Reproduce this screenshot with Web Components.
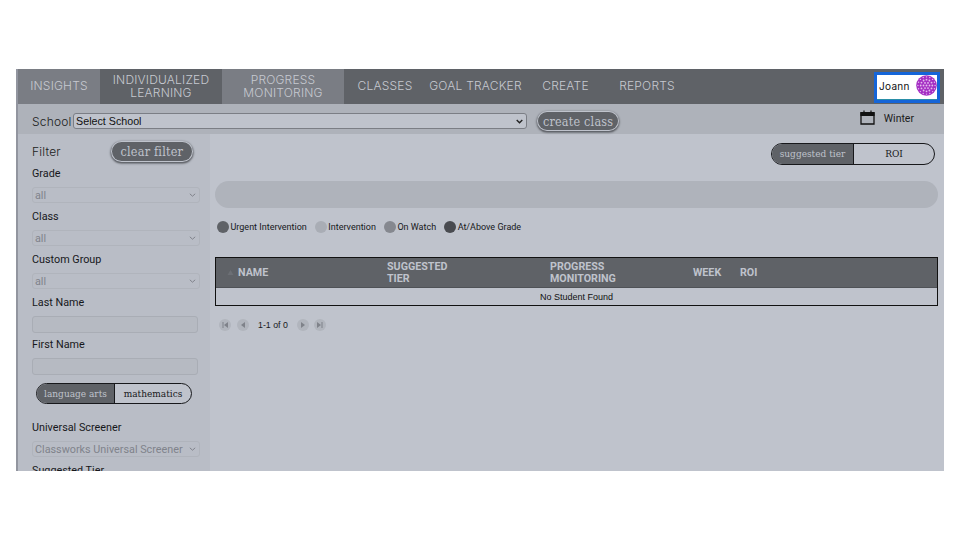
<!DOCTYPE html>
<html><head><meta charset="utf-8">
<style>
html,body{margin:0;padding:0;background:#fff}
body{width:960px;height:540px;overflow:hidden;font-family:Roboto,sans-serif}
app-frame{margin:69px 16px 0}
</style></head><body>
<app-frame>
  <top-nav></top-nav>
  <school-bar></school-bar>
  <div style="display:flex;flex:1;min-height:0">
    <filter-panel></filter-panel>
    <main-panel></main-panel>
  </div>
</app-frame>
<script>
function def(name, css, html){
  customElements.define(name, class extends HTMLElement{
    constructor(){super();const r=this.attachShadow({mode:'open'});r.innerHTML='<style>'+css+'</style>'+(typeof html==='function'?html(this):html);}
  });
}
const NAVFONT='Inter,"Open Sans",sans-serif';
const dots=(()=>{let s='';for(let r of [3,5.8,8.6]){const n=r<4?6:r<7?12:16;for(let i=0;i<n;i++){const a=i*2*Math.PI/n;s+=`<circle cx="${(10.5+r*Math.cos(a)).toFixed(2)}" cy="${(10.5+r*Math.sin(a)).toFixed(2)}" r="${r<7?.9:.7}"/>`}}return s+'<circle cx="10.5" cy="10.5" r="1"/>'})();
def('app-frame',`:host{display:flex;flex-direction:column;width:928px;height:402px;box-sizing:border-box;overflow:hidden;background:#bfc3cc;border-left:2px solid #92959f}`,`<slot></slot>`);
def('nav-item',`:host{display:flex;align-items:center;justify-content:center;text-align:center;box-sizing:border-box;height:35px;padding-bottom:2px;font:300 12px/13px ${NAVFONT};letter-spacing:.2px;color:#c6c9d0;white-space:pre;background:var(--bg,#5f6267);width:var(--w,auto);flex:none}`,`<slot></slot>`);
def('user-chip',`:host{display:flex;align-items:center;justify-content:space-between;box-sizing:border-box;width:66px;height:31px;margin:3px 4px 1px auto;background:#fff;border:3px solid #1565d8;box-shadow:inset 0 -1px 0 #2a8fa8;padding:0 0 4px 2px;font:400 10px Inter,sans-serif;letter-spacing:.3px;color:#111}
svg{display:block}`,`<span>Joann</span><svg width="21" height="21" viewBox="0 0 21 21"><circle cx="10.5" cy="10.5" r="10.3" fill="#a52fc4"/><g fill="#e5bdee">${dots}</g></svg>`);
def('top-nav',`:host{display:flex;height:35px;background:#5f6267;flex:none}`,`
<nav-item style="--w:82px;--bg:#7a7d84">INSIGHTS</nav-item>
<nav-item style="--w:122px;--bg:#5f6267">INDIVIDUALIZED
LEARNING</nav-item>
<nav-item style="--w:122px;--bg:#7a7d84">PROGRESS
MONITORING</nav-item>
<nav-item style="--w:82px">CLASSES</nav-item>
<nav-item style="--w:99px">GOAL TRACKER</nav-item>
<nav-item style="--w:81px">CREATE</nav-item>
<nav-item style="--w:82px">REPORTS</nav-item>
<user-chip></user-chip>`);
def('slab-btn',`:host{display:inline-flex;align-items:center;justify-content:center;box-sizing:border-box;border-radius:12px;background:#5f6267;color:#bfc3cc;font:400 12.5px "DejaVu Serif","Liberation Serif",serif;font-stretch:condensed;box-shadow:0 0 0 1px #bfc3cc,0 1px 2px 1.5px #55585e;height:var(--h,20px);width:var(--w,auto);flex:none}`,`<slot></slot>`);
def('school-bar',`:host{display:flex;align-items:center;box-sizing:border-box;height:30px;background:#aeb2ba;padding:4px 0 0 14px;font:300 12px Inter,sans-serif;letter-spacing:.2px;color:#1b1c20;flex:none}
.sel{box-sizing:border-box;width:454px;height:16px;margin-left:1.5px;border:1px solid #7b7e85;border-bottom-width:1.5px;border-radius:3px;background:#bfc3cc;display:flex;align-items:center;justify-content:space-between;padding:0 3px 0 2px;font:400 10.7px "Liberation Sans",sans-serif;letter-spacing:0;color:#111}
slab-btn{margin-left:11px;--w:80px;--h:18px}
.cal{margin-left:auto;display:flex;align-items:center;gap:9px;font:400 10.5px Roboto,sans-serif;letter-spacing:0;margin-right:30px;position:relative;top:-4px}
.cal span{padding-top:2px}
svg{display:block}`,`<span>School</span><div class="sel"><span>Select School</span><svg width="7" height="5" viewBox="0 0 7 5"><path d="M.7 1 3.5 3.8 6.3 1" fill="none" stroke="#222" stroke-width="1.4"/></svg></div><slab-btn>create class</slab-btn><div class="cal"><svg width="15" height="15" viewBox="0 0 15 15"><path d="M1 3h13v11H1z" fill="none" stroke="#111" stroke-width="1.3"/><path d="M1 2.5h13V5.5H1zM4 0.5v3M11 0.5v3" stroke="#111" stroke-width="1.2" fill="#111"/></svg><span>Winter</span></div>`);
def('field-label',`:host{display:block;font:400 10.8px/13px Roboto,sans-serif;color:#17181b;flex:none}`,`<slot></slot>`);
def('dim-select',`:host{display:flex;align-items:center;justify-content:space-between;box-sizing:border-box;width:168px;height:16px;border:1px solid #b0b4bc;border-radius:3px;padding:0 3px 0 2px;font:400 10.8px Roboto,sans-serif;color:#80838b;flex:none;white-space:nowrap}`,`<slot></slot><svg width="7" height="4" viewBox="0 0 7 4"><path d="M.8.8 3.5 3.2 6.2.8" fill="none" stroke="#80838b" stroke-width="1"/></svg>`);
def('dim-input',`:host{display:block;box-sizing:border-box;width:166px;height:17px;border:1px solid #a9adb5;border-radius:3px;background:#b6bac2;flex:none}`,``);
def('seg-toggle',`:host{display:inline-flex;box-sizing:border-box;height:var(--h,22px);width:var(--w);border:1px solid #17181b;border-radius:12px;overflow:hidden;font:400 9px "DejaVu Serif","Liberation Serif",serif;background:#bfc3cc;flex:none}
div{display:flex;align-items:center;justify-content:center;white-space:nowrap}
.a{background:#5f6267;color:#bfc3cc;border-right:1px solid #17181b;box-sizing:border-box;width:var(--a)}
.b{flex:1;color:#17181b}`,el=>`<div class="a">${el.getAttribute('a')}</div><div class="b">${el.getAttribute('b')}</div>`);
def('filter-panel',`:host{display:flex;flex-direction:column;flex:none;box-sizing:border-box;width:192px;height:337px;padding:0 0 0 14px;background:#b9bdc6;overflow:hidden}
.top{display:flex;align-items:center;flex:none;height:33px;padding-top:1px;box-sizing:border-box;font:300 12px Inter,sans-serif;letter-spacing:.2px;color:#1b1c20}
slab-btn{margin-left:51px;--w:80px;--h:19px}
.g{margin-bottom:7px}
dim-select{margin-bottom:7px}
dim-input{margin-bottom:5px}
seg-toggle{margin:3px 0 17px 4px;--w:156px;--h:21px;--a:78px;align-self:flex-start}`,`
<div class="top"><span>Filter</span><slab-btn>clear filter</slab-btn></div>
<field-label class="g">Grade</field-label><dim-select>all</dim-select>
<field-label class="g">Class</field-label><dim-select>all</dim-select>
<field-label class="g">Custom Group</field-label><dim-select>all</dim-select>
<field-label class="g">Last Name</field-label><dim-input></dim-input>
<field-label class="g">First Name</field-label><dim-input></dim-input>
<seg-toggle a="language arts" b="mathematics"></seg-toggle>
<field-label class="g">Universal Screener</field-label><dim-select>Classworks Universal Screener</dim-select>
<field-label>Suggested Tier</field-label>`);
def('legend-item',`:host{display:inline-flex;align-items:center;gap:1.5px;font:400 9px Roboto,sans-serif;color:#17181b}
i{width:12px;height:12px;border-radius:50%;background:var(--c)}`,`<i></i><slot></slot>`);
def('pager-btn',`:host{display:flex;align-items:center;justify-content:center;width:12px;height:12px;border-radius:50%;background:#b1b5bd}`,el=>{
 const k=el.getAttribute('k');
 const p={first:'M1.5 1v6h1V1zM7 1 3 4l4 3z',prev:'M6 1 2 4l4 3z',next:'M2 1l4 3-4 3z',last:'M6.5 1v6h-1V1zM1 1l4 3-4 3z'}[k];
 return `<svg width="8" height="8" viewBox="0 0 8 8"><path d="${p}" fill="#7f828a"/></svg>`;});
def('student-table',`:host{display:block;box-sizing:border-box;border:1px solid #111;background:#bfc3cc}
.h{display:grid;grid-template-columns:171px 163px 143px 47px 1fr;height:29px;background:#5f6267;color:#bfc3cc;font:700 10.7px/12px Roboto,sans-serif;align-items:center;border-bottom:1px solid #4f5257;box-sizing:content-box}
.h div:first-child{padding-left:11px;display:flex;align-items:center;gap:4px}
.h svg{display:block}
.e{height:17px;display:flex;align-items:center;justify-content:center;font:400 9px "Liberation Sans",sans-serif;color:#111}`,`
<div class="h"><div><svg width="7" height="7" viewBox="0 0 7 7"><path d="M3.5 1 6.5 6H.5z" fill="#6c6f75"/></svg>NAME</div><div>SUGGESTED<br>TIER</div><div>PROGRESS<br>MONITORING</div><div>WEEK</div><div>ROI</div></div>
<div class="e">No Student Found</div>`);
def('main-panel',`:host{display:flex;flex-direction:column;flex:1;min-width:0;box-sizing:border-box;padding:9px 6px 0 5px}
seg-toggle{align-self:flex-end;margin-right:3px;--w:164px;--h:22px;--a:82px}
.bar{height:27px;border-radius:14px;background:#afb3bb;margin-top:16px}
.leg{display:flex;height:14px;align-items:center;gap:8px;margin:12px 0 0 2px}
student-table{margin-top:23px}
.pg{display:flex;align-items:center;margin:13px 0 0 4px;font:400 8.8px "Liberation Sans",sans-serif;color:#17181b}
.pg pager-btn{margin-right:5.5px}
.pg span{margin:0 9px 0 4px}`,`
<seg-toggle a="suggested tier" b="ROI"></seg-toggle>
<div class="bar"></div>
<div class="leg"><legend-item style="--c:#5f6267">Urgent Intervention</legend-item><legend-item style="--c:#a9adb5">Intervention</legend-item><legend-item style="--c:#85888f">On Watch</legend-item><legend-item style="--c:#494b50">At/Above Grade</legend-item></div>
<student-table></student-table>
<div class="pg"><pager-btn k="first"></pager-btn><pager-btn k="prev"></pager-btn><span>1-1 of 0</span><pager-btn k="next"></pager-btn><pager-btn k="last"></pager-btn></div>`);
</script>
</body></html>
